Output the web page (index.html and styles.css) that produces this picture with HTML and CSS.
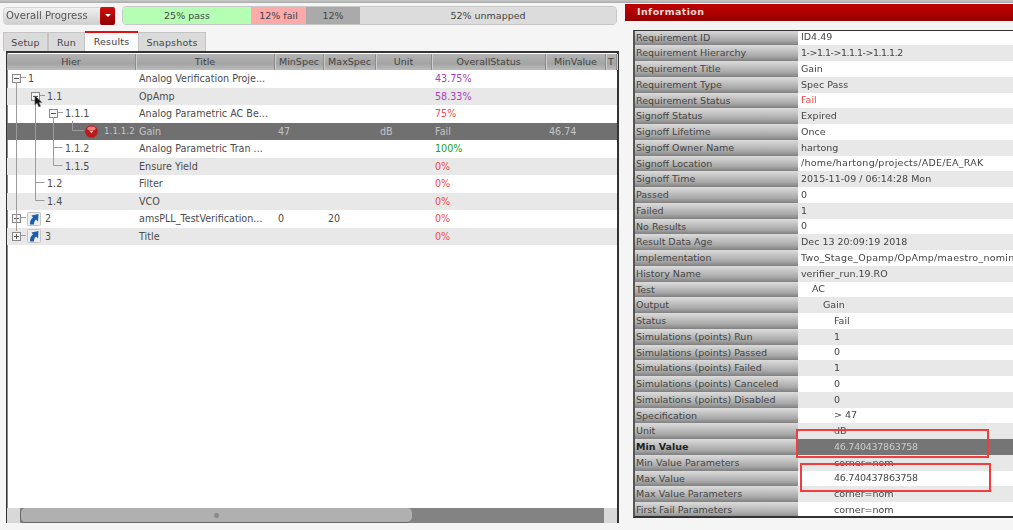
FILE: index.html
```html
<!DOCTYPE html>
<html lang="en">
<head>
<meta charset="utf-8">
<title>Verification Progress</title>
<link rel="stylesheet" href="styles.css">
</head>
<body>
<div class="top-strip"></div>
<div class="app">
  <section class="left">
    <div class="toolbar">
      <div class="combo"><span class="combo-text">Overall Progress</span><span class="combo-btn"></span></div>
      <div class="progress">
        <span class="seg pass">25% pass</span>
        <span class="seg fail">12% fail</span>
        <span class="seg other">12%</span>
        <span class="seg unmapped">52% unmapped</span>
      </div>
    </div>
    <div class="tabs">
      <span class="tab t-setup">Setup</span>
      <span class="tab t-run">Run</span>
      <span class="tab t-results active">Results</span>
      <span class="tab t-snap">Snapshots</span>
    </div>
    <div class="tree-table">
      <div class="row head">
        <span>Hier</span><span>Title</span><span>MinSpec</span><span>MaxSpec</span><span>Unit</span><span>OverallStatus</span><span>MinValue</span><span>T</span>
      </div>
      <svg class="tree-lines" width="110" height="200" viewBox="7 54 110 200">
        <path d="M16.500 83V232M21 78.500h5M21 218.500h5M21 236.500h5M35.500 100V201.500M35.500 183.500h9M35.500 201.500h9M40 96.500h5M53.500 118V166.500M53.500 148.500h9M53.500 166.500h9M58 113.500h5M72.500 122V131.500H84" fill="none" stroke="#9c9c9c"/>
      </svg>
      <div class="row">
        <span class="hier l0"><i class="exp minus"></i>1</span><span class="title">Analog Verification Proje...</span><span></span><span></span><span></span><span class="st purple">43.75%</span><span></span><span></span>
      </div>
      <div class="row alt">
        <span class="hier l1"><i class="exp minus"></i>1.1</span><span class="title">OpAmp</span><span></span><span></span><span></span><span class="st purple">58.33%</span><span></span><span></span>
      </div>
      <div class="row">
        <span class="hier l2"><i class="exp minus"></i>1.1.1</span><span class="title">Analog Parametric AC Be...</span><span></span><span></span><span></span><span class="st red">75%</span><span></span><span></span>
      </div>
      <div class="row selected">
        <span class="hier l3"><svg class="fail-ic" viewBox="0 0 14 14" width="13" height="13"><circle cx="7" cy="7" r="6.800" fill="#b81c1c"/><ellipse cx="7" cy="3.800" rx="4.500" ry="2.300" fill="#e98080"/><path d="M5 6.500 7 9l2-2.500z" fill="#f4dada"/></svg><span class="num-tight">1.1.1.2</span></span><span class="title">Gain</span><span class="n">47</span><span></span><span class="c">dB</span><span class="st">Fail</span><span class="mv">46.74</span><span></span>
      </div>
      <div class="row">
        <span class="hier l2t">1.1.2</span><span class="title">Analog Parametric Tran ...</span><span></span><span></span><span></span><span class="st green">100%</span><span></span><span></span>
      </div>
      <div class="row alt">
        <span class="hier l2t">1.1.5</span><span class="title">Ensure Yield</span><span></span><span></span><span></span><span class="st red">0%</span><span></span><span></span>
      </div>
      <div class="row">
        <span class="hier l1t">1.2</span><span class="title">Filter</span><span></span><span></span><span></span><span class="st red">0%</span><span></span><span></span>
      </div>
      <div class="row alt">
        <span class="hier l1t">1.4</span><span class="title">VCO</span><span></span><span></span><span></span><span class="st red">0%</span><span></span><span></span>
      </div>
      <div class="row">
        <span class="hier l0"><i class="exp plus"></i><svg class="link-ic" viewBox="0 0 14 14" width="14" height="14"><rect x=".5" y=".5" width="13" height="13" rx="1" fill="#eee" stroke="#c4c4c4"/><path d="M3 12.500C3 8 4.500 6.500 6 5.500L4.500 3.500 11.500 2 11 9.500 9 7.500C7.500 8.500 7 10.500 7 12.500z" fill="#1c5ea8"/></svg>2</span><span class="title">amsPLL_TestVerification...</span><span class="n">0</span><span>20</span><span></span><span class="st red">0%</span><span></span><span></span>
      </div>
      <div class="row alt">
        <span class="hier l0"><i class="exp plus"></i><svg class="link-ic" viewBox="0 0 14 14" width="14" height="14"><rect x=".5" y=".5" width="13" height="13" rx="1" fill="#eee" stroke="#c4c4c4"/><path d="M3 12.500C3 8 4.500 6.500 6 5.500L4.500 3.500 11.500 2 11 9.500 9 7.500C7.500 8.500 7 10.500 7 12.500z" fill="#1c5ea8"/></svg>3</span><span class="title">Title</span><span></span><span></span><span></span><span class="st red">0%</span><span></span><span></span>
      </div>
      <svg class="cursor" width="9" height="13" viewBox="0 0 12 18"><path d="M1 1v13l3-3 2.500 5.500 2.500-1L6.500 10.500H11z" fill="#111" stroke="#777" stroke-width=".6"/></svg>
      <div class="hscroll"><span class="arrow l"></span><span class="thumb"><i></i></span><span class="track"></span><span class="arrow r"></span></div>
    </div>
  </section>
  <section class="right">
    <h2 class="info-bar">Information</h2>
    <div class="info-table">
      <div class="ir"><span class="k">Requirement ID</span><span class="v">ID4.49</span></div>
      <div class="ir"><span class="k">Requirement Hierarchy</span><span class="v tight">1-&gt;1.1-&gt;1.1.1-&gt;1.1.1.2</span></div>
      <div class="ir"><span class="k">Requirement Title</span><span class="v">Gain</span></div>
      <div class="ir"><span class="k">Requirement Type</span><span class="v">Spec Pass</span></div>
      <div class="ir"><span class="k">Requirement Status</span><span class="v fail-t">Fail</span></div>
      <div class="ir"><span class="k">Signoff Status</span><span class="v">Expired</span></div>
      <div class="ir"><span class="k">Signoff Lifetime</span><span class="v">Once</span></div>
      <div class="ir"><span class="k">Signoff Owner Name</span><span class="v">hartong</span></div>
      <div class="ir"><span class="k">Signoff Location</span><span class="v wide">/home/hartong/projects/ADE/EA_RAK</span></div>
      <div class="ir"><span class="k">Signoff Time</span><span class="v">2015-11-09 / 06:14:28 Mon</span></div>
      <div class="ir"><span class="k">Passed</span><span class="v">0</span></div>
      <div class="ir"><span class="k">Failed</span><span class="v">1</span></div>
      <div class="ir"><span class="k">No Results</span><span class="v">0</span></div>
      <div class="ir"><span class="k">Result Data Age</span><span class="v">Dec 13 20:09:19 2018</span></div>
      <div class="ir"><span class="k">Implementation</span><span class="v wide">Two_Stage_Opamp/OpAmp/maestro_nominal</span></div>
      <div class="ir"><span class="k">History Name</span><span class="v">verifier_run.19.RO</span></div>
      <div class="ir"><span class="k">Test</span><span class="v i1">AC</span></div>
      <div class="ir"><span class="k">Output</span><span class="v i2">Gain</span></div>
      <div class="ir"><span class="k">Status</span><span class="v i3">Fail</span></div>
      <div class="ir"><span class="k">Simulations (points) Run</span><span class="v i3">1</span></div>
      <div class="ir"><span class="k">Simulations (points) Passed</span><span class="v i3">0</span></div>
      <div class="ir"><span class="k">Simulations (points) Failed</span><span class="v i3">1</span></div>
      <div class="ir"><span class="k">Simulations (points) Canceled</span><span class="v i3">0</span></div>
      <div class="ir"><span class="k">Simulations (points) Disabled</span><span class="v i3">0</span></div>
      <div class="ir"><span class="k">Specification</span><span class="v i3">&gt; 47</span></div>
      <div class="ir"><span class="k">Unit</span><span class="v i3">dB</span></div>
      <div class="ir hl"><span class="k">Min Value</span><span class="v i3 digits">46.740437863758</span></div>
      <div class="ir"><span class="k">Min Value Parameters</span><span class="v i3">corner=nom</span></div>
      <div class="ir"><span class="k">Max Value</span><span class="v i3 digits">46.740437863758</span></div>
      <div class="ir"><span class="k">Max Value Parameters</span><span class="v i3">corner=nom</span></div>
      <div class="ir"><span class="k">First Fail Parameters</span><span class="v i3">corner=nom</span></div>
      <span class="mark m1"></span>
      <span class="mark m2"></span>
    </div>
  </section>
</div>
</body>
</html>
```
FILE: styles.css
```css
* { box-sizing: border-box; }
html, body { margin: 0; height: 100%; }
body {
  background: #f5f5f5;
  font-family: "DejaVu Sans", sans-serif;
  font-size: 9.5px;
  color: #444;
  overflow: hidden;
}
.top-strip {
  height: 3px;
  background: linear-gradient(#c8c8c8, #a8aca8);
  filter: blur(.4px);
}
.app {
  display: flex;
  width: 1013px;
  height: 527px;
  filter: blur(.35px);
}
.left {
  width: 625px;
  padding: 3px 0 0 3px;
  display: flex;
  flex-direction: column;
}
.toolbar {
  display: flex;
  gap: 7px;
  height: 19px;
}
.combo {
  width: 112px;
  height: 18px;
  margin-top: 1px;
  display: flex;
  justify-content: space-between;
  background: linear-gradient(#f0f0f0, #cfcfcf);
  border-radius: 4px;
  border: 1px solid #d4d4d4;
}
.combo-text { padding: 2px 0 0 2px; font-size: 10px; color: #555; }
.combo-btn {
  width: 15px;
  background: linear-gradient(#d01010, #8e0000);
  border-radius: 2px;
  position: relative;
  margin: -1px -1px -1px 0;
}
.combo-btn::after {
  content: "";
  position: absolute;
  left: 5px;
  top: 7px;
  border: 3px solid transparent;
  border-top: 3px solid #fff;
}
.progress {
  width: 495px;
  height: 19px;
  display: flex;
  border: 1px solid #c8c8c8;
  border-radius: 4px;
  overflow: hidden;
}
.seg { display: flex; align-items: center; justify-content: center; font-size: 9.5px; color: #444; }
.pass { width: 128px; background: #b4ffb4; }
.fail { width: 55px; background: #ffaaaa; }
.other { width: 54px; background: #aaa; }
.unmapped { flex: 1; background: #dcdcdc; }
.tabs {
  display: flex;
  height: 20px;
  margin-top: 6px;
}
.tab {
  background: #dadada;
  border: 1px solid #c4c4c4;
  border-bottom: 0;
  text-align: center;
  padding-top: 4px;
  height: 19px;
  margin-top: 1px;
  color: #444;
  font-size: 9.5px;
  letter-spacing: .2px;
}
.t-setup { width: 45px; }
.t-run { width: 37px; }
.t-results { width: 53px; }
.t-snap { width: 68px; }
.tab.active {
  background: #fafafa;
  border: 0;
  border-top: 2px solid #e01010;
  height: 20px;
  margin-top: 0;
  padding-top: 3px;
}
.tree-table {
  position: relative;
  width: 613px;
  height: 472px;
  margin-left: 3px;
  padding-top: 1px;
  background: #fff;
  border: 0 solid #333;
  border-width: 2px 2px 0 1px;
  box-shadow: inset 1px 0 0 #888;
}
.row {
  display: grid;
  grid-template-columns: 129px 139px 49px 52px 56px 114px 60px 1fr;
  height: 17.5px;
  align-items: center;
  white-space: nowrap;
  color: #4c4c4c;
  font-size: 9.6px;
  line-height: 15px;
}
.row > span { overflow: hidden; padding-left: 4px; }
.row.head {
  height: 16px;
  background: linear-gradient(#b4b4b4, #a4a4a4 60%, #bbb);
  color: #444;
  text-align: center;
  font-size: 9.5px;
}
.row.head > span {
  padding: 0;
  line-height: 16px;
  border-right: 1px solid #8c8c8c;
  box-shadow: 1px 0 0 #ccc;
}
.alt { background: #e8e8e8; }
.selected { background: #707070; color: #c4c4c4; }
.hier { display: flex; align-items: center; position: relative; }
.row > .hier { overflow: visible; }
.row > .l0 { padding-left: 5px; }
.row > .l1 { padding-left: 24px; }
.row > .l2 { padding-left: 42px; }
.row > .l3 { padding-left: 78px; }
.row > .l2t { padding-left: 58px; }
.row > .l1t { padding-left: 40px; }
.exp {
  width: 9px;
  height: 9px;
  border: 1px solid #888;
  background: #f4f4f4;
  margin-right: 7px;
  position: relative;
  flex: none;
}
.exp::before {
  content: "";
  position: absolute;
  left: 1px;
  top: 3px;
  width: 5px;
  height: 1px;
  background: #555;
}
.plus::after {
  content: "";
  position: absolute;
  left: 3px;
  top: 1px;
  width: 1px;
  height: 5px;
  background: #555;
}
.fail-ic { margin-right: 6px; flex: none; }
.num-tight { font-size: 8.6px; letter-spacing: .1px; }
.link-ic { margin: 0 4px 0 -1px; flex: none; }
.row > .title { padding-left: 3px; }
.row > .st { padding-left: 3px; }
.row > .n { padding-left: 3px; }
.row > .c { padding-left: 4px; }
.row > .mv { padding-left: 3px; }
.purple { color: #a840c0; }
.red { color: #f04a4a; }
.green { color: #20a020; }
.tree-lines { position: absolute; left: 0; top: 0; pointer-events: none; z-index: 1; }
.cursor { position: absolute; left: 27px; top: 42px; z-index: 2; }
.hscroll {
  position: absolute;
  left: 0;
  right: 0;
  bottom: 0;
  height: 15px;
  display: flex;
  background: #888;
}
.arrow { width: 13px; background: #d8d8d8; flex: none; }
.thumb {
  width: 392px;
  background: #b0b0b0;
  border-radius: 5px;
  display: flex;
  align-items: center;
  justify-content: center;
  border-bottom: 1px solid #666;
  border-left: 1px solid #666;
}
.thumb i { width: 5px; height: 5px; border-radius: 50%; background: #8a8a8a; }
.track { flex: 1; background: #838383; }
.right {
  width: 388px;
  padding-top: 1px;
}
.info-bar {
  margin: 0;
  height: 17px;
  background: linear-gradient(#c00000, #a80000 70%, #8c0000);
  color: #f0d8d8;
  font-size: 9.5px;
  font-weight: bold;
  padding: 2px 0 0 12px;
  letter-spacing: .4px;
}
.info-table {
  position: relative;
  margin: 9px 0 0 8px;
  border: 0 solid #333;
  border-width: 1px 0 2px 2px;
  border-left-color: #555;
  background: #fff;
  height: 488px;
  overflow: hidden;
}
.ir {
  display: grid;
  grid-template-columns: 163px 1fr;
  height: 15.75px;
  align-items: center;
  white-space: nowrap;
  overflow: hidden;
  line-height: 14px;
}
.ir:first-child { margin-top: -1.5px; }
.ir:nth-child(even) { background: #e8e8e8; }
.k {
  height: 100%;
  background: linear-gradient(#dcdcdc, #a8a8a8 70%, #808080);
  padding: 1px 0 0 1px;
  color: #444;
  font-size: 9.5px;
}
.v { padding-left: 3px; color: #444; overflow: hidden; }
.tight { letter-spacing: -.5px; }
.wide { letter-spacing: .25px; }
.digits { letter-spacing: -.25px; }
.i1 { padding-left: 14px; }
.i2 { padding-left: 25px; }
.i3 { padding-left: 36px; }
.fail-t { color: #f04a4a; }
.hl { background: #757575 !important; }
.hl .k { font-weight: bold; color: #222; }
.hl .v { color: #ccc; }
.mark {
  position: absolute;
  border: 2px solid #f33d3d;
  height: 29px;
}
.m1 { left: 161px; top: 398px; width: 193px; }
.m2 { left: 165px; top: 432px; width: 191px; }
```
